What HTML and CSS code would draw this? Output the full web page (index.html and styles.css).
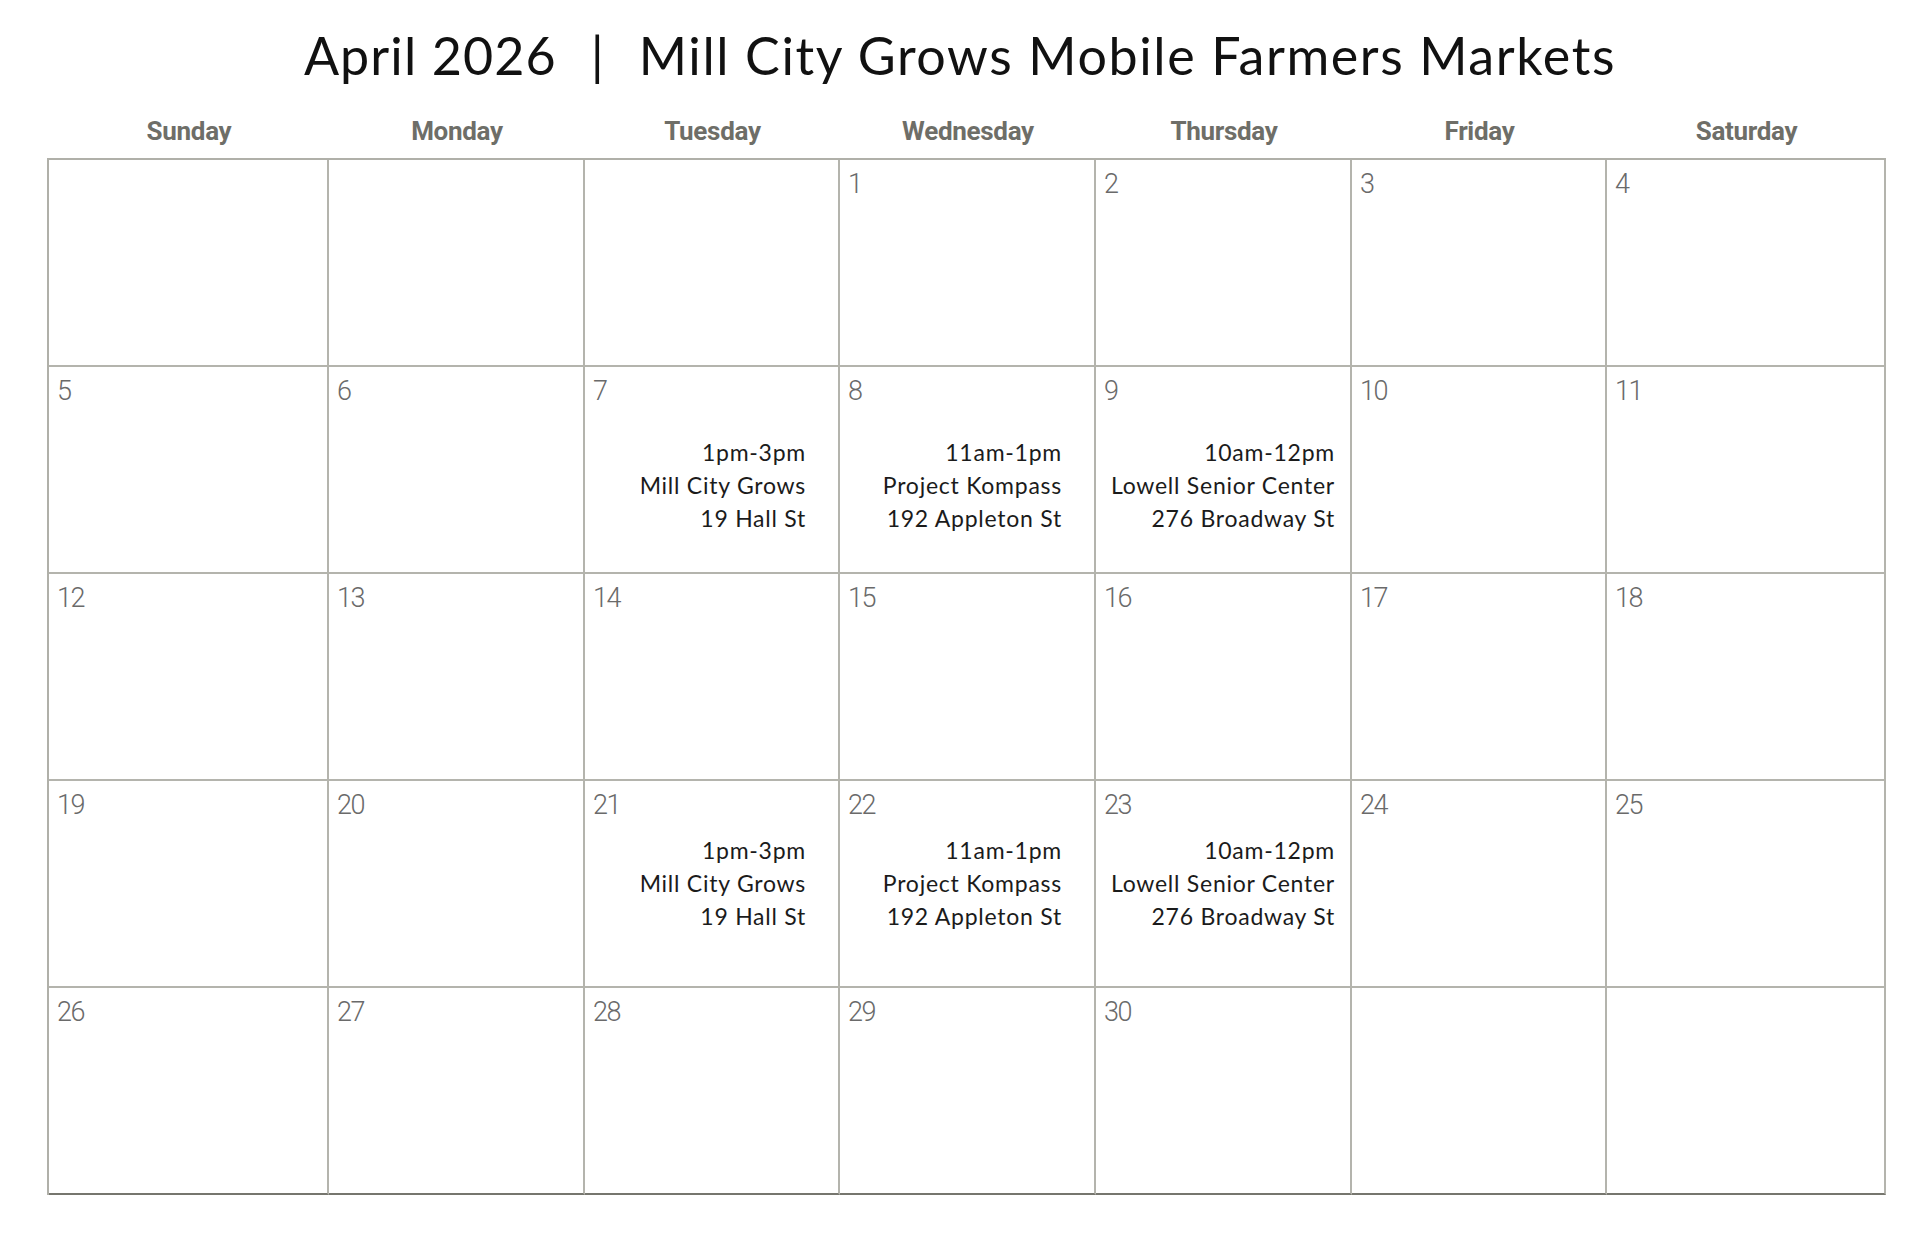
FILE: index.html
```html
<!DOCTYPE html>
<html lang="en">
<head>
<meta charset="utf-8">
<title>April 2026 | Mill City Grows Mobile Farmers Markets</title>
<link rel="stylesheet" href="styles.css">
</head>
<body>
<div class="page">
  <h1 class="title"><span class="t-month">April 2026</span><span class="t-sep">|</span><span class="t-name">Mill City Grows Mobile Farmers Markets</span></h1>
  <div class="board">
    <div class="weekdays">
      <div class="weekday">Sunday</div>
      <div class="weekday">Monday</div>
      <div class="weekday">Tuesday</div>
      <div class="weekday">Wednesday</div>
      <div class="weekday">Thursday</div>
      <div class="weekday">Friday</div>
      <div class="weekday">Saturday</div>
    </div>
    <div class="calendar">
      <div class="cell"></div>
      <div class="cell"></div>
      <div class="cell"></div>
      <div class="cell"><div class="num">1</div></div>
      <div class="cell"><div class="num">2</div></div>
      <div class="cell"><div class="num">3</div></div>
      <div class="cell"><div class="num">4</div></div>

      <div class="cell"><div class="num">5</div></div>
      <div class="cell"><div class="num">6</div></div>
      <div class="cell"><div class="num">7</div>
        <div class="event event-low"><div>1pm-3pm</div><div>Mill City Grows</div><div>19 Hall St</div></div></div>
      <div class="cell"><div class="num">8</div>
        <div class="event event-low"><div>11am-1pm</div><div>Project Kompass</div><div>192 Appleton St</div></div></div>
      <div class="cell"><div class="num">9</div>
        <div class="event event-low event-wide"><div>10am-12pm</div><div>Lowell Senior Center</div><div>276 Broadway St</div></div></div>
      <div class="cell"><div class="num">10</div></div>
      <div class="cell"><div class="num">11</div></div>

      <div class="cell"><div class="num">12</div></div>
      <div class="cell"><div class="num">13</div></div>
      <div class="cell"><div class="num">14</div></div>
      <div class="cell"><div class="num">15</div></div>
      <div class="cell"><div class="num">16</div></div>
      <div class="cell"><div class="num">17</div></div>
      <div class="cell"><div class="num">18</div></div>

      <div class="cell"><div class="num">19</div></div>
      <div class="cell"><div class="num">20</div></div>
      <div class="cell"><div class="num">21</div>
        <div class="event"><div>1pm-3pm</div><div>Mill City Grows</div><div>19 Hall St</div></div></div>
      <div class="cell"><div class="num">22</div>
        <div class="event"><div>11am-1pm</div><div>Project Kompass</div><div>192 Appleton St</div></div></div>
      <div class="cell"><div class="num">23</div>
        <div class="event event-wide"><div>10am-12pm</div><div>Lowell Senior Center</div><div>276 Broadway St</div></div></div>
      <div class="cell"><div class="num">24</div></div>
      <div class="cell"><div class="num">25</div></div>

      <div class="cell last"><div class="num">26</div></div>
      <div class="cell last"><div class="num">27</div></div>
      <div class="cell last"><div class="num">28</div></div>
      <div class="cell last"><div class="num">29</div></div>
      <div class="cell last"><div class="num">30</div></div>
      <div class="cell last"></div>
      <div class="cell last"></div>
    </div>
  </div>
</div>
</body>
</html>
```

FILE: styles.css
```css
* { box-sizing: border-box; }

html, body {
  margin: 0;
  padding: 0;
  background: #ffffff;
}

.page {
  width: 1920px;
  height: 1242px;
}

.title {
  margin: 0;
  padding-top: 23px;
  height: 87px;
  display: flex;
  justify-content: center;
  font-family: "Lato", "Noto Sans", sans-serif;
  font-weight: 400;
  font-size: 52px;
  line-height: 64px;
  color: #111111;
  white-space: pre;
}

.t-month { letter-spacing: 1.1px; }

.t-sep { margin: 0 35px 0 34px; }

.t-name { letter-spacing: 1.6px; }

.board {
  padding-left: 47px;
}

.weekdays {
  display: grid;
  grid-template-columns: 280px 256px 255px 256px 256px 255px 279px;
  height: 71px;
  padding-top: 29px;
  padding-left: 2px;
}

.weekday {
  text-align: center;
  font-family: "Roboto", "Liberation Sans", sans-serif;
  font-weight: 700;
  font-size: 26px;
  line-height: 30px;
  letter-spacing: -0.3px;
  color: #6e6e68;
}

.calendar {
  display: grid;
  grid-template-columns: 280px 256px 255px 256px 256px 255px 279px;
  grid-auto-rows: 207px;
  width: 1839px;
  border-top: 2px solid #b0b0a9;
  border-left: 2px solid #b0b0a9;
}

.cell {
  border-right: 2px solid #b4b4ad;
  border-bottom: 2px solid #b4b4ad;
  padding: 8px 0 0 8px;
  display: flex;
  flex-direction: column;
}

.cell.last { border-bottom-color: #76766e; }

.num {
  font-family: "Roboto", "Liberation Sans", sans-serif;
  font-weight: 300;
  font-size: 27px;
  line-height: 32px;
  letter-spacing: -1.5px;
  color: #6a6a6a;
}

.event {
  margin-top: 13px;
  padding-right: 32px;
  text-align: right;
  font-family: "Lato", "Noto Sans", sans-serif;
  font-size: 23px;
  line-height: 33px;
  color: #1b1b1b;
  letter-spacing: 0.75px;
}

.event-low { margin-top: 29px; }

.event-wide { padding-right: 15px; }
```
